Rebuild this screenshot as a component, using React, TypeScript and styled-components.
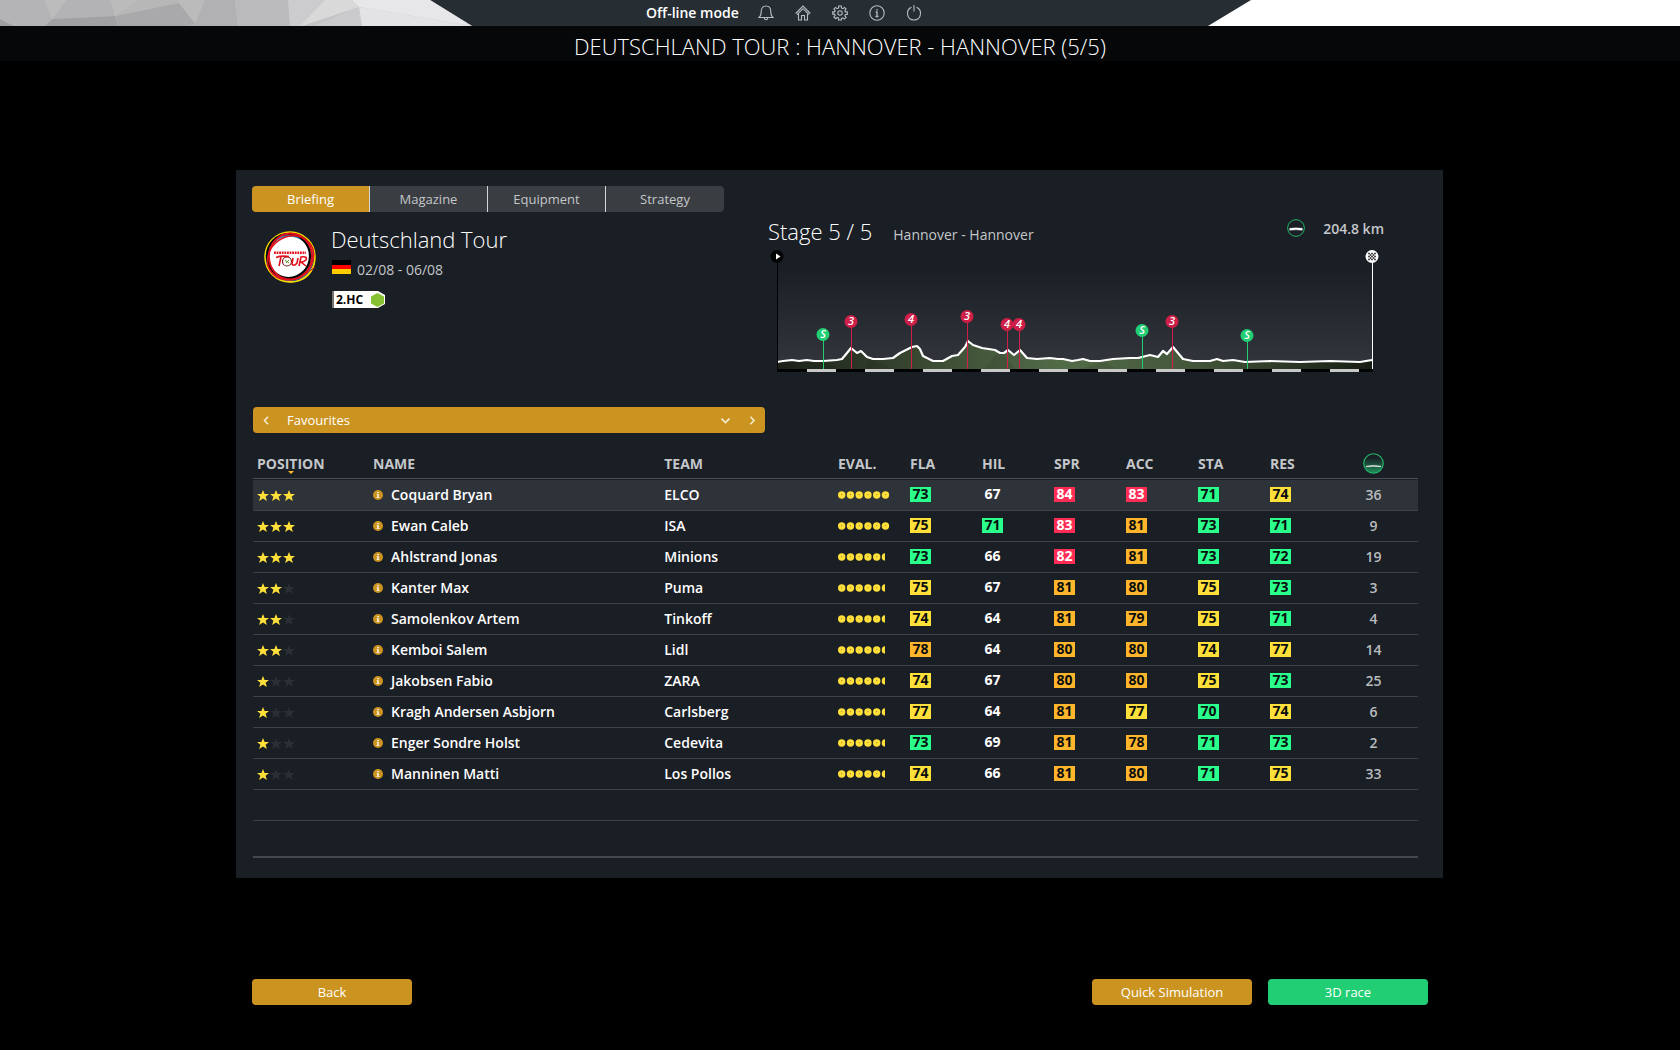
import React from "react";
import styled, { createGlobalStyle } from "styled-components";

const GlobalStyle = createGlobalStyle`
  *, *::before, *::after { box-sizing: border-box; }
  body {
    margin: 0;
    background: #000;
    color: #fff;
    font-family: "Open Sans", "Noto Sans", sans-serif;
    font-size: 14px;
  }
  button, select { font: inherit; color: inherit; border: 0; background: none; padding: 0; margin: 0; cursor: pointer; }
  h1, h2, p { margin: 0; }
  svg { display: block; }
`;

/* ---------- top bar ---------- */

const TopBar = styled.header`
  display: grid;
  grid-template-columns: 472px 1fr 472px;
  height: 26px;
  background: #262d33;
`;

const RightWedge = styled.div`
  background: #fff;
  clip-path: polygon(43px 0, 100% 0, 100% 100%, 0 100%);
`;

const TopNav = styled.nav`
  display: flex;
  align-items: center;
  padding-left: 174px;
`;

const ModeLabel = styled.span`
  font-weight: 600;
  line-height: 26px;
  height: 26px;
  margin-right: 9px;
  white-space: nowrap;
`;

const IconButton = styled.button`
  display: flex;
  justify-content: center;
  align-items: center;
  width: 37px;
  height: 26px;
`;

const TitleBar = styled.div`
  height: 35px;
  background: #050709;
  text-align: center;
`;

const Title = styled.h1`
  font-size: 22px;
  font-weight: 300;
  line-height: 40px;
`;

/* ---------- panel ---------- */

const Page = styled.main`
  padding: 109px 237px 45px 236px;
`;

const Panel = styled.section`
  background: #1a1e25;
  padding: 16px 0 20px 16px;
`;

const Tabs = styled.div`
  display: flex;
  width: 472px;
  height: 26px;
  border-radius: 4px;
  overflow: hidden;
`;

const Tab = styled.button<{ $active?: boolean }>`
  width: 25%;
  line-height: 24px;
  font-size: 13px;
  background: ${(p) => (p.$active ? "#cb9420" : "#3a3d42")};
  color: ${(p) => (p.$active ? "#fff" : "#c4c7c9")};
  &:not(:last-child) { border-right: 1px solid #d5d6d7; }
`;

const Overview = styled.div`
  display: grid;
  grid-template-columns: 516px 1fr;
  padding-right: 59px;
  margin-bottom: 34px;
`;

const Race = styled.div`
  display: flex;
  gap: 14px;
  padding: 11px 0 0 11px;
`;

const LogoSlot = styled.div`
  padding-top: 7px;
`;

const RaceName = styled.h2`
  font-size: 22px;
  font-weight: 300;
  line-height: 32px;
`;

const Dates = styled.p`
  display: flex;
  gap: 6px;
  margin-top: 5px;
  font-size: 14px;
  line-height: 20px;
  color: #c4c7c9;
`;

const Flag = styled.span`
  width: 19px;
  height: 14px;
  margin-left: 1px;
  background: linear-gradient(#000 0 5px, #f00 5px 9px, #fc0 9px);
`;

const Category = styled.div`
  display: flex;
  align-items: center;
  justify-content: space-between;
  width: 53px;
  height: 17px;
  margin: 11px 0 0 1px;
  padding: 0 1px 0 2px;
  border-left: 2px solid #77736d;
  background: #fffefa;
  color: #000;
  font-size: 12px;
  font-weight: 700;
  line-height: 17px;
  clip-path: polygon(0 0, 46px 0, 100% 4px, 100% 13px, 46px 100%, 0 100%);
`;

const Stage = styled.div`
  padding-top: 3px;
`;

const StageHead = styled.div`
  display: flex;
  align-items: baseline;
  height: 32px;
`;

const Route = styled.span`
  margin-left: 21px;
  font-size: 14px;
  color: #c4c7c9;
`;

const Distance = styled.div`
  display: flex;
  align-self: flex-start;
  align-items: center;
  gap: 18px;
  height: 20px;
  margin: 3px 0 0 auto;
  font-size: 14px;
  font-weight: 600;
  color: #c4c7c9;
`;

const Profile = styled.svg`
  width: calc(100% - 6px);
  height: auto;
  margin: 2px 0 0 2px;
`;

const MarkText = styled.text`
  font-size: 11px;
  font-weight: 600;
  font-style: italic;
  text-anchor: middle;
  fill: #fff;
`;

/* ---------- list ---------- */

const ListArea = styled.div`
  padding: 0 25px 0 1px;
`;

const Picker = styled.div`
  display: flex;
  width: 512px;
  height: 26px;
  border-radius: 4px;
  background: #cb9420;
  margin-bottom: 17px;
`;

const PickerStep = styled.button`
  display: flex;
  align-items: center;
  justify-content: center;
  width: 26px;
`;

const PickerField = styled.div`
  position: relative;
  flex: 1;
  display: flex;
  svg {
    position: absolute;
    right: 9px;
    top: 9px;
    pointer-events: none;
  }
`;

const PickerSelect = styled.select`
  flex: 1;
  appearance: none;
  padding-left: 8px;
  font-size: 13px;
  option { color: #000; }
`;

const Table = styled.table`
  width: 100%;
  table-layout: fixed;
  border-spacing: 0;
`;

const HeadCell = styled.th<{ $center?: boolean }>`
  height: 30px;
  padding: ${(p) => (p.$center ? "0 0 2px" : "0 0 1px 4px")};
  text-align: ${(p) => (p.$center ? "center" : "left")};
  font-weight: 700;
  line-height: 20px;
  color: #c4c7c9;
  border-bottom: 1px solid #1a1e25;
  box-shadow: inset 0 -1px #4b4f54;
  svg { margin: 0 auto; }
`;

const SortLabel = styled.span`
  position: relative;
  &::after {
    content: "";
    position: absolute;
    left: calc(50% - 3px);
    bottom: -1px;
    border: 3px solid transparent;
    border-top-color: #fdb827;
    border-bottom: 0;
  }
`;

const Row = styled.tr<{ $selected?: boolean }>`
  background: ${(p) => (p.$selected ? "#2e3239" : "transparent")};
`;

const Cell = styled.td<{ $last?: boolean }>`
  height: ${(p) => (p.$last ? "37px" : "31px")};
  padding: 0 0 0 4px;
  line-height: 20px;
  font-weight: 600;
  white-space: nowrap;
  border-bottom: ${(p) => (p.$last ? "2px solid #45494e" : "1px solid #3e4246")};
`;

const NumberCell = styled(Cell)`
  padding: 0;
  text-align: center;
  color: #b9bcbf;
`;

const Rider = styled.div`
  display: flex;
  align-items: center;
  gap: 8px;
`;

const tones = {
  none: ["transparent", "#fff"],
  green: ["#2bff8b", "#0a0d0f"],
  yellow: ["#ffe03a", "#0a0d0f"],
  orange: ["#fdb62b", "#0a0d0f"],
  red: ["#ff2d55", "#fff"],
} as const;

const Score = styled.span<{ $tone: keyof typeof tones }>`
  display: block;
  width: 21px;
  height: 15px;
  margin-bottom: 1px;
  line-height: 14px;
  text-align: center;
  font-weight: 700;
  background: ${(p) => tones[p.$tone][0]};
  color: ${(p) => tones[p.$tone][1]};
`;

/* ---------- footer ---------- */

const Actions = styled.footer`
  display: flex;
  gap: 16px;
  margin-top: 101px;
  padding: 0 15px 0 16px;
`;

const Action = styled.button<{ $go?: boolean; $first?: boolean }>`
  width: 160px;
  height: 26px;
  border-radius: 4px;
  line-height: 24px;
  font-size: 13px;
  background: ${(p) => (p.$go ? "#22ce74" : "#cb9420")};
  margin-right: ${(p) => (p.$first ? "auto" : "0")};
`;

/* ---------- drawings ---------- */

const facets: [string, string][] = [
  ["0,0 45,0 52,19 45,26 14,26 0,19", "#b4b3b5"],
  ["0,19 14,26 0,26", "#a09fa1"],
  ["45,0 66,0 52,19", "#bdbcbd"],
  ["66,0 111,0 115,16 52,19", "#b3b2b4"],
  ["111,0 138,0 115,16", "#bcbbbc"],
  ["138,0 179,0 179,3 115,16", "#b8b7b8"],
  ["52,19 115,16 118,26 45,26", "#a1a0a2"],
  ["115,16 179,3 195,23 190,26 118,26", "#a9a8aa"],
  ["179,0 205,0 195,23 179,3", "#bcbbbc"],
  ["205,0 235,0 238,26 190,26 195,23", "#b1b0b2"],
  ["235,0 288,0 290,26 238,26", "#bab9bb"],
  ["288,0 325,0 325,2 300,26 290,26", "#cccbcd"],
  ["325,0 352,0 359,7 302,26 300,26", "#dad9da"],
  ["359,7 362,26 314,26", "#cbcacc"],
  ["352,0 430,0 472,26 359,7", "#e7e6e8"],
  ["359,7 472,26 362,26", "#e3e2e4"],
];

const LeftWedge = () => (
  <svg width="472" height="26" viewBox="0 0 472 26" aria-hidden="true">
    <polygon points="0,0 430,0 472,26 0,26" fill="#c4c3c5" />
    {facets.map(([points, fill]) => (
      <polygon key={points} points={points} fill={fill} />
    ))}
  </svg>
);

const navIcons: { label: string; art: React.ReactNode }[] = [
  {
    label: "Notifications",
    art: <path d="M1 12.500C3 11 3.200 9.500 3.200 6.500 3.200 3.200 5 1 8 1s4.800 2.200 4.800 5.500c0 3 .2 4.500 2.200 6H1zM6.300 13c.2 2.300 3.200 2.300 3.400 0" />,
  },
  {
    label: "Home",
    art: <path d="M.7 8.500 8 1l7.300 7.500M2 9.700l6-6 6 6M3.500 9v6h3v-4.500h3V15h3V9" />,
  },
  {
    label: "Settings",
    art: (
      <>
        <path d="M6.600 1h2.800v2l1.500.700 1.600-1.300 1.600 1.700-1.300 1.600.5 1.200h2v2.600h-2l-.5 1.300 1.300 1.600-1.800 1.700-1.500-1.200-1.400.6V15H6.600v-1.900L5.200 12.500l-1.500 1.200-1.800-1.700 1.300-1.600-.5-1.300h-2V6.900h2l.5-1.200-1.300-1.600 1.700-1.700L5.100 3.700 6.600 3z" />
        <circle cx="8" cy="8" r="2.200" />
      </>
    ),
  },
  {
    label: "Information",
    art: (
      <>
        <circle cx="8" cy="8" r="7.200" />
        <path d="M8 4v1.500M6.700 7H8v4.500M6.500 11.500h3" strokeWidth="1.300" />
      </>
    ),
  },
  {
    label: "Quit",
    art: <path d="M5.500 2.300C-.8 5 .6 15 8 15s8.800-10 2.500-12.700M8 0v6.500" />,
  },
];

const Logo = () => (
  <svg width="54" height="54" viewBox="0 0 54 54" aria-label="Deutschland Tour logo" role="img">
    <circle cx="27" cy="27" r="21" fill="#fff" />
    <g fill="none">
      <ellipse cx="27" cy="27" rx="25" ry="25" stroke="#f6dc00" strokeWidth="1.500" />
      <ellipse cx="28" cy="28" rx="24.500" ry="23" stroke="#f6dc00" strokeWidth="1.200" transform="rotate(30 27 27)" />
      <ellipse cx="27" cy="28" rx="23" ry="22" stroke="#2d8fd5" strokeWidth="1.800" transform="rotate(20 27 27)" />
      <ellipse cx="25.500" cy="26" rx="21.500" ry="22" stroke="#000" strokeWidth="2.200" />
      <ellipse cx="27.500" cy="26.500" rx="21.500" ry="23" stroke="#e2101c" strokeWidth="1.800" />
      <ellipse cx="27" cy="28" rx="24" ry="21" stroke="#e2101c" strokeWidth="1.500" transform="rotate(-35 27 27)" />
      <path d="M4 34c5 14 24 22 40 9l8-6" stroke="#e2101c" />
      <circle cx="24" cy="31.500" r="4.500" stroke="#7a1c1c" strokeWidth="1.200" />
      <path d="M13 27.500q5-2 13-1M18 27l-2 9M30 28l-1 6q2 3 5-1l1-5M36 36l2-9q7-1 5 3-2 2-5 2l5 4" stroke="#e2101c" strokeWidth="1.600" />
      <path d="M11 22.800h32" stroke="#e2101c" strokeWidth="2.600" strokeDasharray="1.800 .8" />
      <path d="m22 30 4 3m0-3-3 3" stroke="#5d9a2f" />
    </g>
  </svg>
);

const CobbleIcon = ({ size, filled }: { size: number; filled?: boolean }) => (
  <svg width={size} height={size} viewBox="0 0 20 20" role="img" aria-label="Terrain">
    <defs>
      <linearGradient id="cobbleFill" x1="0" y1="0" x2="0" y2="1">
        <stop offset="0.200" stopColor="#1a1e25" />
        <stop offset="1" stopColor="#1f8f5a" />
      </linearGradient>
    </defs>
    <circle cx="10" cy="10" r="9.300" fill={filled ? "url(#cobbleFill)" : "none"} stroke="#22b56b" strokeWidth="1.100" />
    <path
      d={filled ? "M3 12.500q7-1.400 14 0v.6q-7-.8-14 0z" : "M3 10.400q7-1.200 14 0v2.200q-7-1.200-14 0z"}
      fill="#fff"
      stroke="#fff"
      strokeWidth=".4"
    />
  </svg>
);

const Star = ({ x, lit }: { x: number; lit: boolean }) => (
  <path
    transform={`translate(${x} 0)`}
    d="M6 0l1.600 4H12L8.600 6.700 9.900 11 6 8.500 2.100 11l1.300-4.300L0 4h4.400z"
    fill={lit ? "#ffe03a" : "#2a2e35"}
  />
);

const Stars = ({ count }: { count: number }) => (
  <svg width="39" height="11" viewBox="0 0 39 11" role="img" aria-label={`${count} of 3`}>
    {[0, 1, 2].map((i) => (
      <Star key={i} x={i * 13} lit={i < count} />
    ))}
  </svg>
);

const Dots = ({ half }: { half: boolean }) => (
  <svg width={half ? 47 : 52} height="8" viewBox={`0 0 ${half ? 47 : 52} 8`} role="img" aria-label={half ? "5.5" : "6"}>
    {[0, 1, 2, 3, 4, 5].map((i) => (
      <g key={i}>
        <circle cx={3.700 + i * 8.750} cy="4" r="3.700" fill="#ffe03a" />
        <circle cx={3.700 + i * 8.750} cy="3.600" r=".7" fill="#a18e2c" />
      </g>
    ))}
  </svg>
);

const InfoDot = () => (
  <svg width="10" height="10" viewBox="0 0 10 10" aria-hidden="true">
    <circle cx="5" cy="5" r="5" fill="#cb9420" />
    <path d="M4.300 2h1.500v1.300H4.300zM3.700 4.200h2v2.800h.8v.8h-3V7h.8V5h-.6z" fill="#fff" />
  </svg>
);

const Chevron = ({ d }: { d: string }) => (
  <svg width="9" height="9" viewBox="0 0 9 9" fill="none" stroke="#f5ead2" strokeWidth="1.600" aria-hidden="true">
    <path d={d} />
  </svg>
);

const ridge =
  "7,113 13,112 22,111 29,112 37,111 44,112 53,112 67,111 72,110 77,104 81,99 87,104 91,102 97,108 103,110 113,110 123,109 130,104 142,98 147,97 150,100 153,107 163,112 173,112 182,107 188,106 195,98 198,92 203,96 212,99 225,101 230,104 234,104 238,101 244,106 250,101 257,109 267,110 280,109 288,110 293,110 302,112 308,111 313,110 320,112 330,112 343,110 360,109 368,109 380,106 388,108 393,102 397,105 403,98 408,104 413,110 423,112 440,112 447,110 453,112 463,111 475,113 500,112 530,113 560,112 590,113 602,111";

const marks: [string, number, number][] = [
  ["S", 53, 86],
  ["3", 81, 73],
  ["4", 141, 71],
  ["3", 197, 68],
  ["4", 237, 76],
  ["4", 249, 76],
  ["S", 372, 82],
  ["3", 402, 73],
  ["S", 477, 87],
];

const StageProfile = () => (
  <Profile viewBox="0 0 610 124" role="img" aria-label="Stage profile">
    <defs>
      <linearGradient id="sky" x1="0" y1="0" x2="0" y2="1">
        <stop offset="0.100" stopColor="#1a1e25" />
        <stop offset="1" stopColor="#33373d" />
      </linearGradient>
      <linearGradient id="land" x1="0" y1="0" x2="1" y2="0">
        <stop offset="0" stopColor="#1a1f18" />
        <stop offset="0.250" stopColor="#3b4a33" />
        <stop offset="0.480" stopColor="#526b47" />
        <stop offset="0.700" stopColor="#43563a" />
        <stop offset="1" stopColor="#171c13" />
      </linearGradient>
    </defs>
    <rect x="8" y="8" width="595" height="112" fill="url(#sky)" />
    <polygon points={`7,120 ${ridge} 602,120`} fill="url(#land)" />
    <path d="M38 120l16-7 15 7zM95 120l4-11 25 11zM215 120l14-19 17 19zM310 120l25-8 10 8z" fill="#000" opacity=".08" />
    <polyline points={ridge} fill="none" stroke="#fff" strokeWidth="2.200" strokeLinejoin="round" />
    <rect x="7" y="120" width="596" height="3" fill="#020304" />
    {Array.from({ length: 10 }, (_, i) => (
      <rect key={i} x={Math.round(37 + i * 58.1)} y="120" width="29" height="3" fill="#c8c8c8" />
    ))}
    <rect x="7" y="8" width="1" height="112" fill="#020304" />
    <circle cx="7" cy="7.500" r="6.500" fill="#020304" />
    <path d="M6 4.500v6l4.500-3z" fill="#fff" />
    {marks.map(([label, x, y]) => {
      const color = label === "S" ? "#22ce74" : "#cd1f48";
      return (
        <g key={label + x}>
          <rect x={x} y={y} width="1" height={120 - y} fill={color} />
          <circle cx={x} cy={y - 0.500} r="6.500" fill={color} />
          <MarkText x={x} y={y + 3}>{label}</MarkText>
        </g>
      );
    })}
    <rect x="602" y="8" width="1" height="112" fill="#fff" />
    <circle cx="602" cy="7.500" r="6.500" fill="#fff" />
    <g fill="#111">
      {[
        [0, -3], [-3, -3], [3, -3], [-1.500, -1.500], [1.500, -1.500], [-3, 0], [0, 0], [3, 0],
        [-1.500, 1.500], [1.500, 1.500], [-3, 3], [0, 3], [3, 3],
      ].map(([dx, dy]) => (
        <rect key={`${dx},${dy}`} x={601.250 + dx} y={6.750 + dy} width="1.500" height="1.500" />
      ))}
    </g>
  </Profile>
);

/* ---------- data ---------- */

type RiderRow = { stars: number; name: string; team: string; scores: number[]; terrain: number; full?: boolean };

const riders: RiderRow[] = [
  { stars: 3, name: "Coquard Bryan", team: "ELCO", scores: [73, 67, 84, 83, 71, 74], terrain: 36, full: true },
  { stars: 3, name: "Ewan Caleb", team: "ISA", scores: [75, 71, 83, 81, 73, 71], terrain: 9, full: true },
  { stars: 3, name: "Ahlstrand Jonas", team: "Minions", scores: [73, 66, 82, 81, 73, 72], terrain: 19 },
  { stars: 2, name: "Kanter Max", team: "Puma", scores: [75, 67, 81, 80, 75, 73], terrain: 3 },
  { stars: 2, name: "Samolenkov Artem", team: "Tinkoff", scores: [74, 64, 81, 79, 75, 71], terrain: 4 },
  { stars: 2, name: "Kemboi Salem", team: "Lidl", scores: [78, 64, 80, 80, 74, 77], terrain: 14 },
  { stars: 1, name: "Jakobsen Fabio", team: "ZARA", scores: [74, 67, 80, 80, 75, 73], terrain: 25 },
  { stars: 1, name: "Kragh Andersen Asbjorn", team: "Carlsberg", scores: [77, 64, 81, 77, 70, 74], terrain: 6 },
  { stars: 1, name: "Enger Sondre Holst", team: "Cedevita", scores: [73, 69, 81, 78, 71, 73], terrain: 2 },
  { stars: 1, name: "Manninen Matti", team: "Los Pollos", scores: [74, 66, 81, 80, 71, 75], terrain: 33 },
];

const toneOf = (value: number): keyof typeof tones =>
  value >= 82 ? "red" : value >= 78 ? "orange" : value >= 74 ? "yellow" : value >= 70 ? "green" : "none";

const statNames = ["FLA", "HIL", "SPR", "ACC", "STA", "RES"];
const columnWidths = ["116px", "25%", "auto", "72px", "72px", "72px", "72px", "72px", "72px", "63px", "89px"];

export default function App() {
  return (
    <>
      <GlobalStyle />
      <TopBar>
        <LeftWedge />
        <TopNav>
          <ModeLabel>Off-line mode</ModeLabel>
          {navIcons.map((icon) => (
            <IconButton key={icon.label} aria-label={icon.label}>
              <svg width="16" height="16" viewBox="0 0 16 16" fill="none" stroke="#b9bdc0" strokeWidth="1.100">
                {icon.art}
              </svg>
            </IconButton>
          ))}
        </TopNav>
        <RightWedge />
      </TopBar>
      <TitleBar>
        <Title>DEUTSCHLAND TOUR : HANNOVER - HANNOVER (5/5)</Title>
      </TitleBar>

      <Page>
        <Panel>
          <Tabs role="tablist">
            {["Briefing", "Magazine", "Equipment", "Strategy"].map((name, i) => (
              <Tab key={name} role="tab" aria-selected={i === 0} $active={i === 0}>
                {name}
              </Tab>
            ))}
          </Tabs>

          <Overview>
            <Race>
              <LogoSlot>
                <Logo />
              </LogoSlot>
              <div>
                <RaceName>Deutschland Tour</RaceName>
                <Dates>
                  <Flag />
                  02/08 - 06/08
                </Dates>
                <Category>
                  2.HC
                  <svg width="13" height="14" viewBox="0 0 13 14" aria-hidden="true">
                    <polygon points="6.500,0 13,3.500 13,10.500 6.500,14 0,10.500 0,3.500" fill="#86c232" />
                  </svg>
                </Category>
              </div>
            </Race>
            <Stage>
              <StageHead>
                <RaceName>Stage 5 / 5</RaceName>
                <Route>Hannover - Hannover</Route>
                <Distance>
                  <CobbleIcon size={18} />
                  204.8 km
                </Distance>
              </StageHead>
              <StageProfile />
            </Stage>
          </Overview>

          <ListArea>
            <Picker>
              <PickerStep aria-label="Previous list">
                <Chevron d="M6 .8 2.500 4.500 6 8.200" />
              </PickerStep>
              <PickerField>
                <PickerSelect aria-label="List" defaultValue="Favourites">
                  <option>Favourites</option>
                </PickerSelect>
                <Chevron d="M.5 2.500 4.500 6.500l4-4" />
              </PickerField>
              <PickerStep aria-label="Next list">
                <Chevron d="M2.500 .8 6 4.500 2.500 8.200" />
              </PickerStep>
            </Picker>

            <Table>
              <colgroup>
                {columnWidths.map((width, i) => (
                  <col key={i} style={{ width }} />
                ))}
              </colgroup>
              <thead>
                <tr>
                  <HeadCell>
                    <SortLabel>POSITION</SortLabel>
                  </HeadCell>
                  <HeadCell>NAME</HeadCell>
                  <HeadCell>TEAM</HeadCell>
                  <HeadCell>EVAL.</HeadCell>
                  {statNames.map((stat) => (
                    <HeadCell key={stat}>{stat}</HeadCell>
                  ))}
                  <HeadCell $center>
                    <CobbleIcon size={21} filled />
                  </HeadCell>
                </tr>
              </thead>
              <tbody>
                {riders.map((rider, i) => (
                  <Row key={rider.name} $selected={i === 0}>
                    <Cell>
                      <Stars count={rider.stars} />
                    </Cell>
                    <Cell>
                      <Rider>
                        <InfoDot />
                        {rider.name}
                      </Rider>
                    </Cell>
                    <Cell>{rider.team}</Cell>
                    <Cell>
                      <Dots half={!rider.full} />
                    </Cell>
                    {rider.scores.map((score, s) => (
                      <Cell key={statNames[s]}>
                        <Score $tone={toneOf(score)}>{score}</Score>
                      </Cell>
                    ))}
                    <NumberCell>{rider.terrain}</NumberCell>
                  </Row>
                ))}
                <Row>
                  <Cell colSpan={11} />
                </Row>
                <Row>
                  <Cell colSpan={11} $last />
                </Row>
              </tbody>
            </Table>
          </ListArea>
        </Panel>

        <Actions>
          <Action $first>Back</Action>
          <Action>Quick Simulation</Action>
          <Action $go>3D race</Action>
        </Actions>
      </Page>
    </>
  );
}
